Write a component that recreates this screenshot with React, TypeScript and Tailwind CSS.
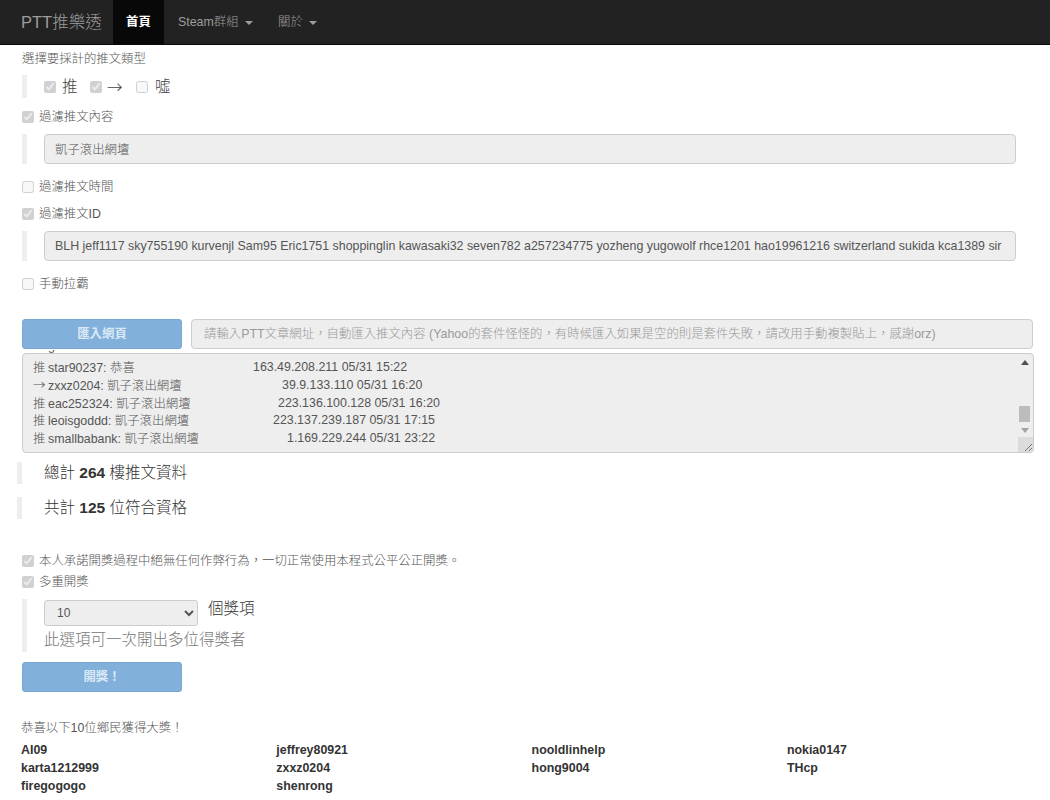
import { ReactNode } from 'react';

const font = '[font-family:"Liberation_Sans","Noto_Sans_CJK_TC",sans-serif]';

const pushes = [
  { who: 'star90237: 恭喜', mark: '推', w: 'w-[220px]', ip: '163.49.208.211 05/31 15:22' },
  { who: 'zxxz0204: 凱子滾出網壇', mark: '→', w: 'w-[249px]', ip: '39.9.133.110 05/31 16:20' },
  { who: 'eac252324: 凱子滾出網壇', mark: '推', w: 'w-[245px]', ip: '223.136.100.128 05/31 16:20' },
  { who: 'leoisgoddd: 凱子滾出網壇', mark: '推', w: 'w-[240px]', ip: '223.137.239.187 05/31 17:15' },
  { who: 'smallbabank: 凱子滾出網壇', mark: '推', w: 'w-[254px]', ip: '1.169.229.244 05/31 23:22' },
];

const winners = ['AI09', 'jeffrey80921', 'nooldlinhelp', 'nokia0147', 'karta1212999', 'zxxz0204', 'hong9004', 'THcp', 'firegogogo', 'shenrong'];

const ids = 'BLH jeff1117 sky755190 kurvenjl Sam95 Eric1751 shoppinglin kawasaki32 seven782 a257234775 yozheng yugowolf rhce1201 hao19961216 switzerland sukida kca1389 sir';

function Check({ label, on, className }: { label: string; on?: boolean; className?: string }) {
  return (
    <label className={`flex items-center h-[18px] pt-[2px] text-[#555] ${className ?? ''}`}>
      <input type="checkbox" disabled defaultChecked={on} className="w-[12px] h-[12px] m-0 mr-[5px]" />
      <span>{label}</span>
    </label>
  );
}

function Quote({ children, className }: { children: ReactNode; className?: string }) {
  return <div className={`border-l-[5px] border-[#eee] pl-[17px] ${className ?? ''}`}>{children}</div>;
}

function Caret() {
  return <span className="inline-block ml-[6px] align-middle border-x-[4px] border-x-transparent border-t-[4px] border-t-[#9d9d9d]" />;
}

export default function App() {
  return (
    <div className={`${font} font-light text-[12.4px] text-[#333] bg-white h-[800px] overflow-hidden`}>
      <nav className="h-[45px] bg-[#222] border-b border-[#080808] flex text-[#9d9d9d]">
        <div className="pl-[21px] pr-[15px] text-[16.5px] leading-[44px] w-[113px] whitespace-nowrap">PTT推樂透</div>
        <div className="w-[51px] bg-[#080808] text-white font-bold text-center leading-[45px]">首頁</div>
        <div className="pl-[14px] w-[100px] leading-[45px] whitespace-nowrap">Steam群組<Caret /></div>
        <div className="pl-[14px] leading-[45px] whitespace-nowrap">關於<Caret /></div>
      </nav>

      <div className="px-[22px]">
        <div className="mt-[5px] h-[18px] leading-[18px] text-[#555]">選擇要採計的推文類型</div>

        <Quote className="mt-[7px] h-[23px] flex items-center text-[15.5px] leading-[23px] text-[#444]">
          <input type="checkbox" disabled defaultChecked className="w-[12px] h-[12px] m-0" />
          <span className="ml-[6px] w-[28px]">推</span>
          <input type="checkbox" disabled defaultChecked className="w-[12px] h-[12px] m-0" />
          <span className="ml-[5px] w-[29px] [font-family:'Noto_Sans_CJK_TC',sans-serif]">→</span>
          <input type="checkbox" disabled className="w-[12px] h-[12px] m-0" />
          <span className="ml-[7px]">噓</span>
        </Quote>

        <Check on label="過濾推文內容" className="mt-[9px]" />
        <Quote className="mt-[9px] h-[30px] pr-[12px]">
          <input disabled defaultValue="凱子滾出網壇" className="block w-full h-[30px] px-[10px] bg-[#eee] border border-[#ccc] rounded-[4px] text-[#555]" />
        </Quote>

        <Check label="過濾推文時間" className="mt-[13px]" />
        <Check on label="過濾推文ID" className="mt-[9px]" />
        <Quote className="mt-[9px] h-[30px] pr-[12px]">
          <input disabled defaultValue={ids} className="block w-full h-[30px] px-[10px] bg-[#eee] border border-[#ccc] rounded-[4px] text-[#555]" />
        </Quote>
        <Check label="手動拉霸" className="mt-[13px]" />

        <div className="mt-[27px] flex gap-[9px] w-[1011px]">
          <button disabled className="w-[160px] h-[30px] shrink-0 bg-[#81b0db] border border-[#78a8d4] rounded-[3px] text-[#dce9f5] font-bold">匯入網頁</button>
          <input disabled placeholder="請輸入PTT文章網址，自動匯入推文內容 (Yahoo的套件怪怪的，有時候匯入如果是空的則是套件失敗，請改用手動複製貼上，感謝orz)" className="flex-1 h-[30px] px-[12px] bg-[#eee] border border-[#ccc] rounded-[4px] placeholder:text-[#999]" />
        </div>

        <div className="relative mt-[4px] w-[1012px]">
          {/* tail of the line scrolled out above the box */}
          <div className="absolute -top-[3px] left-[26px] w-[8px] h-[3px] overflow-hidden text-[#555]">
            <div className="-mt-[10px] leading-[12px]">g</div>
          </div>
          <div className="relative h-[100px] bg-[#eee] border border-[#ccc] rounded-[4px] overflow-hidden text-[#555]">
            <div className="pl-[10px] pt-[5px]">
              {pushes.map((p) => (
                <div key={p.who} className="flex h-[17.75px] leading-[17.75px] whitespace-nowrap">
                  <span className={`${p.w} shrink-0`}>
                    <span className="[font-family:'Noto_Sans_CJK_TC',sans-serif] inline-block w-[15px]">{p.mark}</span>
                    {p.who}
                  </span>
                  <span>{p.ip}</span>
                </div>
              ))}
            </div>
            {/* fake scrollbar */}
            <div className="absolute right-0 top-0 bottom-0 w-[17px] flex flex-col items-center">
              <span className="mt-[6px] border-x-[4px] border-x-transparent border-b-[5px] border-b-[#505050]" />
              <span className="mt-[41px] w-[11px] h-[16px] bg-[#bcbcbc]" />
              <span className="mt-[6px] border-x-[4px] border-x-transparent border-t-[5px] border-t-[#a3a3a3]" />
            </div>
            <div className="absolute right-0 bottom-0 w-[15px] h-[15px] bg-[#dcdcdc] flex items-end justify-end">
              <svg width="10" height="10" viewBox="0 0 10 10" stroke="#777" strokeWidth="1"><path d="M9 2L2 9M9 6L6 9" /></svg>
            </div>
          </div>
        </div>

        <Quote className="-ml-[5px] mt-[9px] h-[22px] pl-[22px] text-[15.5px] leading-[22px]">
          總計 <span className="font-bold">264</span> 樓推文資料
        </Quote>
        <Quote className="-ml-[5px] mt-[13px] h-[22px] pl-[22px] text-[15.5px] leading-[22px]">
          共計 <span className="font-bold">125</span> 位符合資格
        </Quote>

        <Check on label="本人承諾開獎過程中絕無任何作弊行為，一切正常使用本程式公平公正開獎。" className="mt-[32px]" />
        <Check on label="多重開獎" className="mt-[3px]" />

        <Quote className="mt-[9px] h-[53px] text-[15.5px]">
          <div className="flex">
            <select disabled defaultValue="10" className="w-[154px] h-[26px] mt-[1px] pl-[8px] bg-[#eee] border border-[#ccc] rounded-[3px] text-[12px] text-[#555] opacity-100">
              <option>10</option>
            </select>
            <span className="ml-[10px] leading-[20px]">個獎項</span>
          </div>
          <div className="mt-[2px] leading-[24px] text-[#777]">此選項可一次開出多位得獎者</div>
        </Quote>

        <button disabled className="block mt-[10px] w-[160px] h-[30px] bg-[#81b0db] border border-[#78a8d4] rounded-[3px] text-[#dce9f5] font-bold">開獎！</button>

        <div className="-ml-[1px] mt-[27px] leading-[18px] text-[#555]">恭喜以下10位鄉民獲得大獎！</div>
        <div className="-ml-[1px] mt-[4px] grid grid-cols-[255.3px_255.3px_255.3px_255.3px] font-bold leading-[18px] text-[#333]">
          {winners.map((w) => (
            <div key={w}>{w}</div>
          ))}
        </div>
      </div>
    </div>
  );
}
